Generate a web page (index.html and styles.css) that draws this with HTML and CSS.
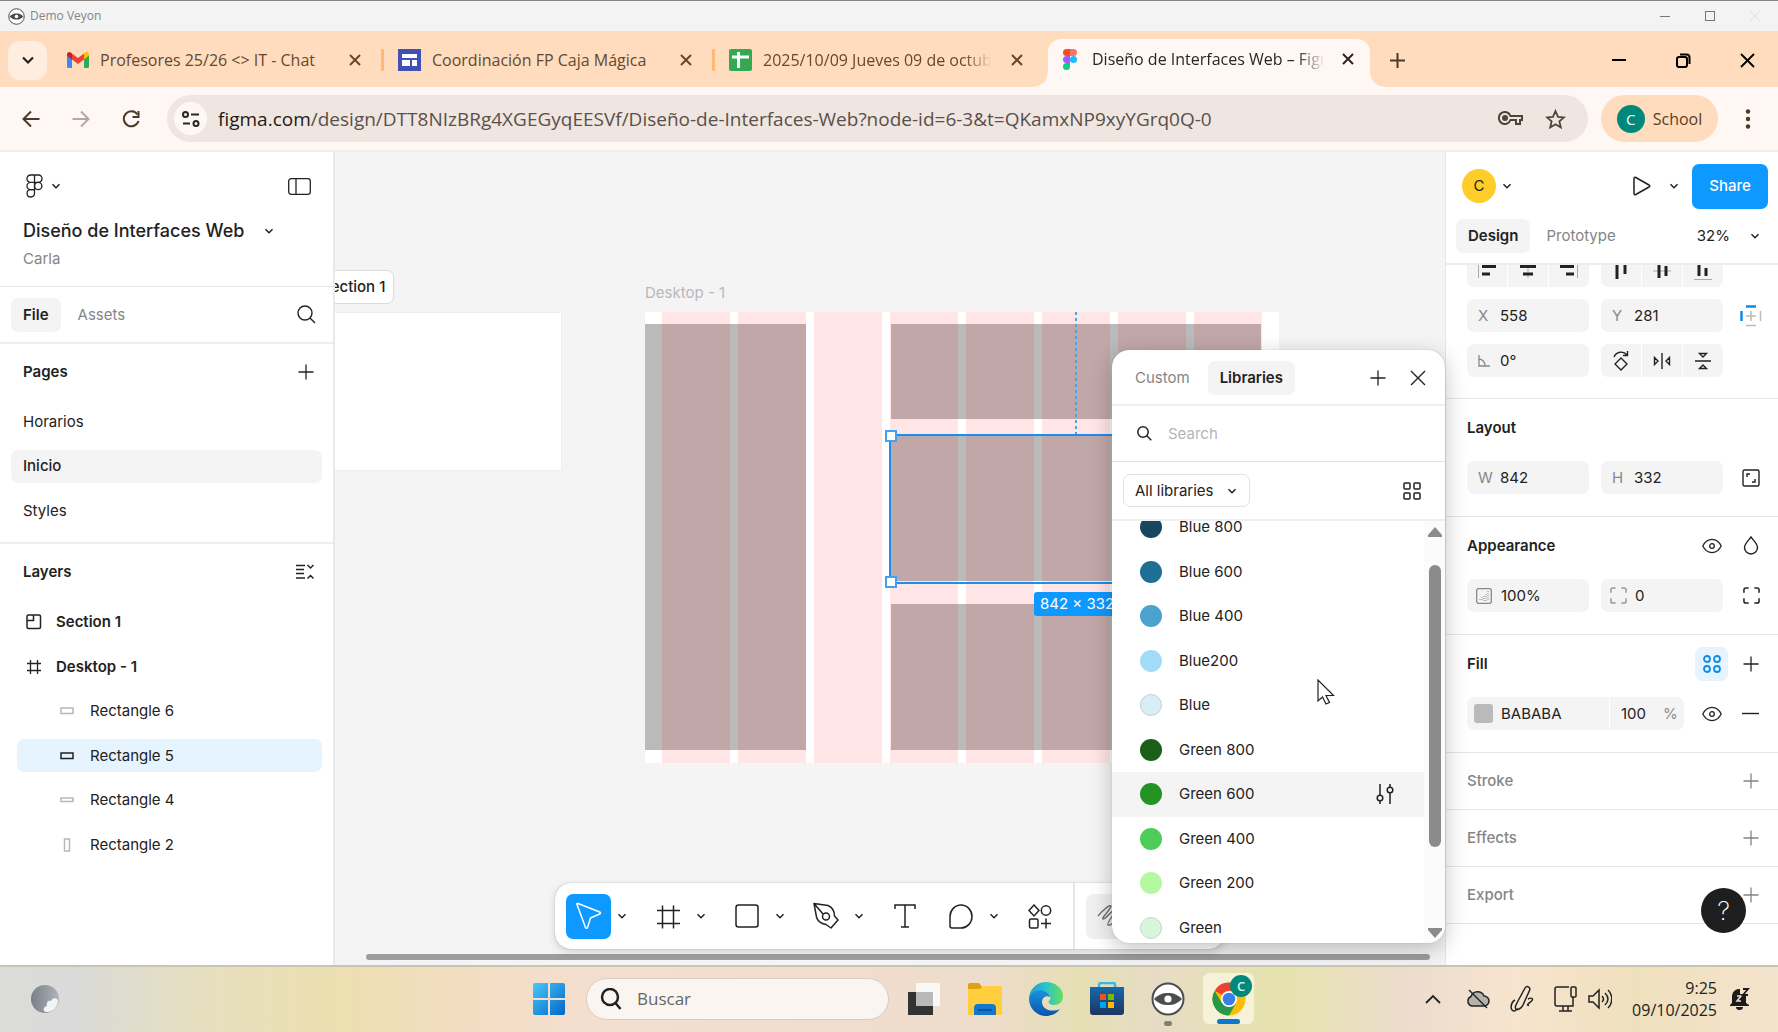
FILE: index.html
```html
<!DOCTYPE html>
<html lang="es">
<head>
<meta charset="utf-8">
<title>Demo Veyon</title>
<link rel="stylesheet" href="styles.css">
</head>
<body>
<svg class="sprite" aria-hidden="true">
  <symbol id="chev" viewBox="0 0 10 10"><path d="M1.5 3.3 5 6.8l3.5-3.5" fill="none" stroke="currentColor" stroke-width="1.5"/></symbol>
  <symbol id="plus" viewBox="0 0 16 16"><path d="M8 .5v15M.5 8h15" fill="none" stroke="currentColor" stroke-width="1.3"/></symbol>
  <symbol id="x" viewBox="0 0 12 12"><path d="m1 1 10 10M11 1 1 11" fill="none" stroke="currentColor" stroke-width="2"/></symbol>
  <symbol id="frame" viewBox="0 0 16 16"><path d="M4.5 1v14M11.500 1v14M1 4.500h14M1 11.500h14" fill="none" stroke="currentColor" stroke-width="1.300"/></symbol>
  <symbol id="frame-lg" viewBox="0 0 24 24"><path d="M6.500 1v23M17.500 1v23M1 6h23M1 19h23" fill="none" stroke="currentColor" stroke-width="1.500"/></symbol>
  <symbol id="eye" viewBox="0 0 20 16"><path d="M.8 8C3 3.600 6.300 1.400 10 1.400S17 3.600 19.200 8c-2.200 4.400-5.500 6.600-9.200 6.600S3 12.400.8 8Z" fill="none" stroke="currentColor" stroke-width="1.3"/><circle cx="10" cy="8" r="2.300" fill="none" stroke="currentColor" stroke-width="1.300"/></symbol>
  <symbol id="corners" viewBox="0 0 18 18"><path d="M1 6V3a2 2 0 0 1 2-2h3M12 1h3a2 2 0 0 1 2 2v3M17 12v3a2 2 0 0 1-2 2h-3M6 17H3a2 2 0 0 1-2-2v-3" fill="none" stroke="currentColor" stroke-width="1.600"/></symbol>
  <symbol id="wide" viewBox="0 0 14 8"><path d="M1 1h12v5.500H1z" fill="none" stroke="currentColor" stroke-width="1.500"/></symbol>
  <symbol id="veyon" viewBox="0 0 34 34"><circle cx="17" cy="17" r="15.500" fill="#fff" stroke="#4d4d4f" stroke-width="2"/><path d="M3 17c5-5 9-6 14-6s9 1 14 6c-5 5-9 6-14 6S8 22 3 17Z" fill="#4d4d4f"/><circle cx="17" cy="17" r="3.600" fill="#fff"/></symbol>
</svg>

<header class="titlebar">
  <svg width="17" height="17"><use href="#veyon"/></svg>
  <span class="titlebar-name">Demo Veyon</span>
  <div class="title-controls">
    <button aria-label="Minimizar"><svg width="12" height="12"><path d="M1 6.500h10" stroke="#777"/></svg></button>
    <button aria-label="Maximizar"><svg width="12" height="12"><rect x="1.500" y="1.500" width="9" height="9" fill="none" stroke="#777"/></svg></button>
    <button aria-label="Cerrar"><svg width="12" height="12"><path d="m1 1 10 10M11 1 1 11" stroke="#ddd"/></svg></button>
  </div>
</header>

<nav class="tabstrip">
  <button class="tab-search" aria-label="Buscar pestañas"><svg width="14" height="14" viewBox="0 0 14 14"><path d="m2 4.500 5 5 5-5" fill="none" stroke="#222" stroke-width="2.200"/></svg></button>
  <div class="tab">
    <svg width="22" height="16" viewBox="0 0 22 16"><path d="M0 3v11.500A1.500 1.500 0 0 0 1.500 16H5V6Z" fill="#4285f4"/><path d="M22 3v11.500a1.500 1.500 0 0 1-1.500 1.500H17V6Z" fill="#34a853"/><path d="M17 1.500V7.500l5-4V2.500C22 .2 19.700-.7 18 .7Z" fill="#fbbc04"/><path d="M5 1.500V7.500L0 3.500V2.500C0 .2 2.300-.7 4 .7Z" fill="#c5221f"/><path d="M5 1.500v6l6 4.500 6-4.500v-6L11 6Z" fill="#ea4335"/></svg>
    <span class="tab-name">Profesores 25/26 &lt;&gt; IT - Chat</span>
    <button class="tab-close" aria-label="Cerrar pestaña"><svg width="12" height="12"><use href="#x"/></svg></button>
  </div>
  <div class="tab">
    <svg width="23" height="22" viewBox="0 0 23 22"><path d="M0 0h23v22H0z" fill="#3f51b5"/><path d="M4 5h15v4H4zM4 11h8v6H4zM14 11h5v6h-5z" fill="#fff"/></svg>
    <span class="tab-name">Coordinación FP Caja Mágica</span>
    <button class="tab-close" aria-label="Cerrar pestaña"><svg width="12" height="12"><use href="#x"/></svg></button>
  </div>
  <div class="tab">
    <svg width="23" height="22" viewBox="0 0 23 22"><rect width="23" height="22" rx="2" fill="#34a853"/><path d="M3 8h17M9.500 3v16" stroke="#fff" stroke-width="3"/></svg>
    <span class="tab-name fade">2025/10/09 Jueves 09 de octubre</span>
    <button class="tab-close" aria-label="Cerrar pestaña"><svg width="12" height="12"><use href="#x"/></svg></button>
  </div>
  <div class="tab active">
    <svg width="14" height="21" viewBox="0 0 14 21"><path d="M7 0H3.500a3.500 3.500 0 0 0 0 7H7Z" fill="#f24e1e"/><path d="M7 0h3.500a3.500 3.500 0 0 1 0 7H7Z" fill="#ff7262"/><path d="M7 7H3.500a3.500 3.500 0 0 0 0 7H7Z" fill="#a259ff"/><circle cx="10.500" cy="10.500" r="3.500" fill="#1abcfe"/><path d="M7 14H3.500A3.500 3.500 0 1 0 7 17.500Z" fill="#0acf83"/></svg>
    <span class="tab-name fade">Diseño de Interfaces Web – Figma</span>
    <button class="tab-close" aria-label="Cerrar pestaña"><svg width="12" height="12"><use href="#x"/></svg></button>
  </div>
  <button class="new-tab" aria-label="Nueva pestaña"><svg width="15" height="15" viewBox="0 0 15 15"><path d="M7.500 0v15M0 7.500h15" stroke="#4b3a28" stroke-width="2"/></svg></button>
  <div class="win-controls">
    <button aria-label="Minimizar"><svg width="15" height="15"><path d="M0 7h14" stroke="#000" stroke-width="2"/></svg></button>
    <button aria-label="Restaurar"><svg width="15" height="15" fill="none" stroke="#000" stroke-width="2"><rect x="1" y="4" width="10" height="10" rx="2"/><path d="M4 1.500h6.500a3 3 0 0 1 3 3V11"/></svg></button>
    <button aria-label="Cerrar"><svg width="15" height="15"><path d="m1 1 13 13M14 1 1 14" stroke="#000" stroke-width="1.800"/></svg></button>
  </div>
</nav>

<div class="navbar">
  <button class="nav-btn" aria-label="Atrás"><svg width="18" height="18" fill="none" stroke="#4b3a28" stroke-width="2"><path d="M17.500 9H2M9 1.500 1.500 9 9 16.500"/></svg></button>
  <button class="nav-btn" aria-label="Adelante"><svg width="18" height="18" fill="none" stroke="#b3aaa4" stroke-width="2"><path d="M.5 9H16M9 1.500 16.500 9 9 16.500"/></svg></button>
  <button class="nav-btn" aria-label="Recargar"><svg width="18" height="18" fill="none" stroke="#4b3a28" stroke-width="2"><path d="M15.500 4.500A7.500 7.500 0 1 0 16.500 11"/><path d="M16.500 1v6h-6"/></svg></button>
  <div class="omnibox">
    <button class="tune" aria-label="Información del sitio"><svg width="18" height="16" fill="none" stroke="#2c2520" stroke-width="2"><circle cx="3.500" cy="3.500" r="2.500"/><path d="M9 3.500h8M1 12.500h7"/><circle cx="14" cy="12.500" r="2.500"/></svg></button>
    <div class="url"><span>figma.com</span>/design/DTT8NIzBRg4XGEGyqEESVf/Diseño-de-Interfaces-Web?node-id=6-3&amp;t=QKamxNP9xyYGrq0Q-0</div>
    <button class="nav-icon" aria-label="Contraseñas"><svg width="25" height="15" fill="none" stroke="#4f443c" stroke-width="2"><path d="M12.500 5H24v4h-2v4h-4V9h-5.500A6 6 0 1 1 12.500 5Z"/><circle cx="7" cy="7" r="2" fill="#4f443c"/></svg></button>
    <button class="nav-icon" aria-label="Marcador"><svg width="21" height="20" viewBox="0 0 21 20"><path d="m10.500 2 2.500 5.800 6 .6-4.600 4 1.400 6-5.300-3.200-5.300 3.200 1.400-6L2 8.400l6-.6Z" fill="none" stroke="#4f443c" stroke-width="1.800"/></svg></button>
  </div>
  <button class="profile"><span class="avatar">C</span>School</button>
  <button class="nav-menu" aria-label="Menú"><svg width="6" height="20" fill="#4b3a28"><circle cx="3" cy="2.500" r="2.200"/><circle cx="3" cy="10" r="2.200"/><circle cx="3" cy="17.500" r="2.200"/></svg></button>
</div>

<main class="app">
  <aside class="left">
    <div class="file-head">
      <div class="logo-row">
        <button class="logo" aria-label="Menú principal"><svg width="17" height="24" viewBox="0 0 17 24" fill="none" stroke="#222" stroke-width="1.300"><path d="M8.500 1H4.600a3.600 3.600 0 0 0 0 7.300h3.900ZM8.500 1h3.900a3.600 3.600 0 0 1 0 7.300H8.500ZM8.500 8.300H4.600a3.600 3.600 0 0 0 0 7.300h3.900Z"/><circle cx="12.200" cy="12" r="3.700"/><path d="M8.500 15.600H4.600a3.700 3.700 0 1 0 3.900 3.700Z"/></svg><svg width="10" height="10"><use href="#chev"/></svg></button>
        <button aria-label="Panel lateral"><svg width="23" height="17" fill="none" stroke="#222" stroke-width="1.300"><rect x=".7" y=".7" width="21.600" height="15.600" rx="2.500"/><path d="M8 .7v15.600"/></svg></button>
      </div>
      <button class="file-name">Diseño de Interfaces Web<svg width="10" height="10"><use href="#chev"/></svg></button>
      <div class="owner">Carla</div>
    </div>
    <div class="file-tabs">
      <button class="pill on">File</button><button class="pill">Assets</button>
      <button class="push" aria-label="Buscar"><svg width="19" height="19" fill="none" stroke="#222" stroke-width="1.400"><circle cx="8" cy="8" r="7"/><path d="m13 13 5 5"/></svg></button>
    </div>
    <section class="pages">
      <div class="sec-head"><h2>Pages</h2><button aria-label="Añadir página"><svg width="16" height="16"><use href="#plus"/></svg></button></div>
      <ul class="page-list"><li><button>Horarios</button></li><li><button class="current">Inicio</button></li><li><button>Styles</button></li></ul>
    </section>
    <section class="layers">
      <div class="sec-head"><h2>Layers</h2><button aria-label="Contraer capas"><svg width="18" height="16" fill="none" stroke="#222" stroke-width="1.500"><path d="M0 1.500h9M0 5.500h8M0 9.500h8M0 14h9M11.500 1l3 3 3-3M11.500 14.500l3-3 3 3"/></svg></button></div>
      <ul class="layer-list">
        <li><button class="top"><svg width="16" height="16" fill="none" stroke="#222" stroke-width="1.500"><rect x="1" y="1" width="13.500" height="13.500" rx="1.500"/><path d="M1 6.500h6.500V1"/></svg>Section 1</button></li>
        <li><button class="top"><svg width="16" height="16"><use href="#frame"/></svg>Desktop - 1</button></li>
        <li><button><svg width="14" height="8"><use href="#wide"/></svg>Rectangle 6</button></li>
        <li><button class="sel"><svg width="14" height="8"><use href="#wide"/></svg>Rectangle 5</button></li>
        <li><button><svg width="14" height="6" viewBox="0 0 14 6"><path d="M1 1h12v3.500H1z" fill="none" stroke="currentColor" stroke-width="1.500"/></svg>Rectangle 4</button></li>
        <li><button><svg width="14" height="14" viewBox="0 0 14 14"><path d="M4.500 1h5v12h-5z" fill="none" stroke="currentColor" stroke-width="1.500"/></svg>Rectangle 2</button></li>
      </ul>
    </section>
  </aside>

  <div class="canvas">
    <div class="section-label">Section 1</div>
    <div class="section-box"></div>
    <div class="frame-label">Desktop - 1</div>
    <div class="artboard">
      <div class="shape r2"></div><div class="shape r4"></div><div class="shape r5"></div><div class="shape r6"></div>
      <div class="columns"><i></i><i></i><i></i><i></i><i></i><i></i><i></i><i></i></div>
      <div class="guide"></div>
      <div class="selection"><b class="h1"></b><b class="h2"></b></div>
      <div class="size">842 × 332</div>
    </div>
    <div class="hscroll"></div>
    <div class="tools">
      <button class="tool move" aria-label="Mover"><svg width="26" height="28" fill="none" stroke="#fff" stroke-width="1.500" stroke-linejoin="round"><path d="M2 1.500c-.8-.3-1.300.3-1 1l8.500 23c.4 1 1.700 1 2 0l3-9.500 9.200-4c1.100-.5 1-1.500 0-2Z"/></svg></button>
      <button class="drop" aria-label="Más"><svg width="10" height="10"><use href="#chev"/></svg></button>
      <button class="tool" aria-label="Marco"><svg width="24" height="25"><use href="#frame-lg"/></svg></button>
      <button class="drop" aria-label="Más"><svg width="10" height="10"><use href="#chev"/></svg></button>
      <button class="tool" aria-label="Rectángulo"><svg width="24" height="24" fill="none" stroke="#222" stroke-width="1.500"><rect x="1" y="1" width="22" height="22" rx="2.500"/></svg></button>
      <button class="drop" aria-label="Más"><svg width="10" height="10"><use href="#chev"/></svg></button>
      <button class="tool" aria-label="Pluma"><svg width="26" height="28" fill="none" stroke="#222" stroke-width="1.500" stroke-linejoin="round"><path d="m1 1.500 14 2c4.500 2 6.500 6 6.500 10.500l3.500 4-7 8-5-3.500C8 21.500 4.500 19.500 3.500 15ZM1 1.500l9 10.500"/><circle cx="13" cy="14.500" r="3.500"/></svg></button>
      <button class="drop" aria-label="Más"><svg width="10" height="10"><use href="#chev"/></svg></button>
      <button class="tool solo" aria-label="Texto"><svg width="22" height="24" fill="none" stroke="#222" stroke-width="1.500"><path d="M1 5V1h20v4M11 1v22M7 23h8"/></svg></button>
      <button class="tool" aria-label="Comentario"><svg width="24" height="25" fill="none" stroke="#222" stroke-width="1.500"><path d="M12 1a11 11.500 0 1 1 0 23H3a2 2 0 0 1-2-2v-9.500A11 11.500 0 0 1 12 1Z"/></svg></button>
      <button class="drop" aria-label="Más"><svg width="10" height="10"><use href="#chev"/></svg></button>
      <button class="tool" aria-label="Acciones"><svg width="24" height="25" fill="none" stroke="#222" stroke-width="1.500"><path d="m6 1 5 5.500L6 12 1 6.500Z"/><circle cx="18" cy="6.500" r="4.700"/><rect x="1.500" y="15" width="8.500" height="9" rx="1.500"/><path d="M18 14.500v10M13 19.500h10"/></svg></button>
      <span class="tool-sep"></span>
      <button class="tool draw" aria-label="Dibujar"><svg width="24" height="24" fill="none" stroke="#777" stroke-width="1.500"><path d="M1 12C5 7 13 0 14 2S4 14 6 15 18 3 19 5 9 19 11 21s7-5 9-4 0 4 3 3"/></svg></button>
      <button class="tool" aria-label="Código"></button>
    </div>
  </div>

  <aside class="right">
    <div class="r-head">
      <button class="user" aria-label="Usuario"><span>C</span><svg width="10" height="10"><use href="#chev"/></svg></button>
      <button class="play" aria-label="Presentar"><svg width="18" height="20" fill="none" stroke="#222" stroke-width="1.500" stroke-linejoin="round"><path d="M1 2.500v15c0 1 .8 1.500 1.800 1L16 11c1-.6 1-1.500 0-2L2.800 1.500C1.800 1 1 1.500 1 2.500Z"/></svg></button>
      <button class="play-more" aria-label="Opciones"><svg width="10" height="10"><use href="#chev"/></svg></button>
      <button class="share">Share</button>
    </div>
    <div class="r-tabs"><button class="pill on">Design</button><button class="pill">Prototype</button><button class="zoom">32%<svg width="10" height="10"><use href="#chev"/></svg></button></div>

    <section class="position">
      <div class="prop-row align">
        <div class="seg">
          <button aria-label="Izquierda"><svg width="20" height="16"><path d="M1.500 0v15" stroke="#aaa"/><path d="M5 3.500h14M5 11h8" stroke="#222" stroke-width="3"/></svg></button>
          <button aria-label="Centro"><svg width="18" height="16"><path d="M9 0v15" stroke="#aaa"/><path d="M1 3.500h16M4 11h10" stroke="#222" stroke-width="3"/></svg></button>
          <button aria-label="Derecha"><svg width="20" height="16"><path d="M18.500 0v15" stroke="#aaa"/><path d="M1 3.500h14M7 11h8" stroke="#222" stroke-width="3"/></svg></button>
        </div>
        <div class="seg">
          <button aria-label="Arriba"><svg width="14" height="16"><path d="M3 1v15M11 1v10" stroke="#222" stroke-width="3"/></svg></button>
          <button aria-label="Medio"><svg width="18" height="16"><path d="M0 8h18" stroke="#aaa"/><path d="M6 0v15M13 3v10" stroke="#222" stroke-width="3"/></svg></button>
          <button aria-label="Abajo"><svg width="18" height="18"><path d="M0 17.500h18" stroke="#aaa"/><path d="M5 0v14M12 6v8" stroke="#222" stroke-width="3"/></svg></button>
        </div>
      </div>
      <div class="prop-row">
        <label class="field"><span>X</span><input value="558"></label>
        <label class="field"><span>Y</span><input value="281"></label>
        <button class="end" aria-label="Restricciones"><svg width="22" height="22" fill="none"><path d="M6 1.500h10M1.500 6v10" stroke="#0c8ce9" stroke-width="2.500"/><path d="M20.500 6v10M6 20.500h10M11 6v10M6 11h10" stroke="#bbb" stroke-width="1.500"/></svg></button>
      </div>
      <div class="prop-row">
        <label class="field"><span><svg width="12" height="12" fill="none" stroke="#888" stroke-width="1.300"><path d="M1 0v11h11M1 4a6.500 6.500 0 0 1 6 7"/></svg></span><input value="0°" aria-label="Rotación"></label>
        <div class="seg">
          <button aria-label="Girar"><svg width="18" height="20" fill="none" stroke="#222" stroke-width="1.400"><path d="m9 7 6 6-6 6-6-6ZM2 6c2-5 9-7 13-2M15.500 0v4.500H11"/></svg></button>
          <button aria-label="Voltear horizontal"><svg width="18" height="18" fill="none" stroke="#222" stroke-width="1.400"><path d="M9 1v16M1.500 5.500 5 9l-3.500 3.500ZM16.500 5.500 13 9l3.500 3.500Z"/></svg></button>
          <button aria-label="Voltear vertical"><svg width="18" height="18" fill="none" stroke="#222" stroke-width="1.400"><path d="M1 9h16M5.500 1.500h7L9 5ZM5.500 16.500h7L9 13Z"/></svg></button>
        </div>
      </div>
    </section>
    <section>
      <div class="prop-head"><h2>Layout</h2></div>
      <div class="prop-row">
        <label class="field"><span>W</span><input value="842"></label>
        <label class="field"><span>H</span><input value="332"></label>
        <button class="end" aria-label="Bloquear proporción"><svg width="18" height="18" fill="none" stroke="#222" stroke-width="1.400"><rect x="1" y="1" width="16" height="16" rx="1.500"/><path d="M5 8V5h3M13 10v3h-3"/></svg></button>
      </div>
    </section>
    <section>
      <div class="prop-head"><h2>Appearance</h2><button aria-label="Visibilidad"><svg width="20" height="16"><use href="#eye"/></svg></button><button class="end" aria-label="Mezcla"><svg width="16" height="19" fill="none" stroke="#222" stroke-width="1.400"><path d="M8 1c3 4 6.500 7 6.500 10.500a6.500 6.500 0 0 1-13 0C1.500 8 5 5 8 1Z"/></svg></button></div>
      <div class="prop-row">
        <label class="field with-icon"><span><svg width="16" height="16" fill="none" stroke="#888"><rect x=".7" y=".7" width="14.600" height="14.600" rx="2" stroke-width="1.300"/><path d="M12 3v10M10 6v7M8 8v5M6 9v4M4 11v2" stroke-dasharray="1 1"/></svg></span><input value="100%" aria-label="Opacidad"></label>
        <label class="field with-icon"><span><svg width="17" height="17" color="#999"><use href="#corners"/></svg></span><input value="0" aria-label="Radio"></label>
        <button class="end" aria-label="Esquinas"><svg width="17" height="17"><use href="#corners"/></svg></button>
      </div>
    </section>
    <section>
      <div class="prop-head"><h2>Fill</h2><button class="style-btn" aria-label="Estilos"><svg width="18" height="18" fill="none" stroke="#0c8ce9" stroke-width="1.800"><circle cx="4" cy="4" r="3"/><circle cx="14" cy="4" r="3"/><circle cx="4" cy="14" r="3"/><circle cx="14" cy="14" r="3"/></svg></button><button class="end" aria-label="Añadir relleno"><svg width="16" height="16"><use href="#plus"/></svg></button></div>
      <div class="prop-row fill-row">
        <div class="paint"><i></i><input class="hex" value="BABABA" aria-label="Color"><input class="pct" value="100" aria-label="Opacidad"><span>%</span></div>
        <button class="eye" aria-label="Visibilidad"><svg width="20" height="16"><use href="#eye"/></svg></button>
        <button class="end" aria-label="Quitar"><svg width="18" height="16"><path d="M0 7.500h17" stroke="#222" stroke-width="1.400"/></svg></button>
      </div>
    </section>
    <section class="thin"><h2>Stroke</h2><button class="end" aria-label="Añadir borde"><svg width="16" height="16"><use href="#plus"/></svg></button></section>
    <section class="thin"><h2>Effects</h2><button class="end" aria-label="Añadir efecto"><svg width="16" height="16"><use href="#plus"/></svg></button></section>
    <section class="thin"><h2>Export</h2><button class="end" aria-label="Añadir exportación"><svg width="16" height="16"><use href="#plus"/></svg></button></section>
    <button class="help">?</button>
  </aside>

  <div class="popup" role="dialog" aria-label="Libraries">
    <div class="pop-head"><button class="pill">Custom</button><button class="pill on">Libraries</button>
      <button class="pop-add" aria-label="Añadir"><svg width="16" height="16"><use href="#plus"/></svg></button>
      <button aria-label="Cerrar"><svg width="16" height="16"><path d="m1 1 14 14M15 1 1 15" stroke="#222" stroke-width="1.400"/></svg></button></div>
    <label class="pop-search"><svg width="15" height="15" fill="none" stroke="#222" stroke-width="1.500"><circle cx="6" cy="6" r="5.200"/><path d="m9.800 9.800 4.500 4.500"/></svg><input type="search" placeholder="Search" aria-label="Search"></label>
    <div class="pop-filter"><div class="select"><select aria-label="Biblioteca"><option>All libraries</option></select><svg width="10" height="10"><use href="#chev"/></svg></div>
      <button aria-label="Cuadrícula"><svg width="18" height="18" fill="none" stroke="#222" stroke-width="1.500"><rect x="1" y="1" width="6" height="6" rx="1"/><rect x="11" y="1" width="6" height="6" rx="1"/><rect x="1" y="11" width="6" height="6" rx="1"/><rect x="11" y="11" width="6" height="6" rx="1"/></svg></button></div>
    <div class="pop-body">
      <ul class="swatches">
        <li><button><i class="b8"></i>Blue 800</button></li>
        <li><button><i class="b6"></i>Blue 600</button></li>
        <li><button><i class="b4"></i>Blue 400</button></li>
        <li><button><i class="b2"></i>Blue200</button></li>
        <li><button><i class="b0"></i>Blue</button></li>
        <li><button><i class="g8"></i>Green 800</button></li>
        <li><button class="hover"><i class="g6"></i>Green 600<svg width="18" height="20" fill="none" stroke="#222" stroke-width="1.500"><path d="M4 0v11M4 17v3M14 0v3M14 9v11"/><circle cx="4" cy="14" r="2.800"/><circle cx="14" cy="6" r="2.800"/></svg></button></li>
        <li><button><i class="g4"></i>Green 400</button></li>
        <li><button><i class="g2"></i>Green 200</button></li>
        <li><button><i class="g0"></i>Green</button></li>
      </ul>
      <div class="vscroll"><svg width="14" height="10" fill="#8b8b8b"><path d="M7 0 14 8v2H0V8Z"/></svg><span></span><svg width="14" height="10" fill="#8b8b8b"><path d="M7 10 14 2V0H0v2Z"/></svg></div>
    </div>
    <svg class="cursor" width="18" height="26" viewBox="0 0 18 26"><path d="M1 1v21l4.500-4 3.500 7 3.500-1.500-3.500-7h7.500Z" fill="#fff" stroke="#222" stroke-width="1.200"/></svg>
  </div>
</main>

<footer class="taskbar">
  <button class="weather" aria-label="Tiempo"><svg width="30" height="30"><defs><linearGradient id="mn" x2="1"><stop stop-color="#7a7f88"/><stop offset="1" stop-color="#aeb4bb"/></linearGradient></defs><circle cx="15" cy="15" r="14" fill="url(#mn)"/><path d="M28 16c0 7-5 12-11 12-3 0-4-2-3-4 .5-1 1.500-2 3-2-1-4 2-6 4-5 1-3 5-4 7-1Z" fill="#f3f4f6"/></svg></button>
  <div class="apps">
    <button aria-label="Inicio"><svg width="34" height="34"><defs><linearGradient id="wn" x2="1" y2="1"><stop stop-color="#49c8fb"/><stop offset="1" stop-color="#0067c8"/></linearGradient></defs><path d="M3 1h13v15H1V3a2 2 0 0 1 2-2ZM18 1h13a2 2 0 0 1 2 2v13H18ZM1 18h15v15H3a2 2 0 0 1-2-2ZM18 18h15v13a2 2 0 0 1-2 2H18Z" fill="url(#wn)"/></svg></button>
    <label class="search"><svg width="22" height="22" fill="none" stroke="#222" stroke-width="2.500"><circle cx="10" cy="9" r="8"/><path d="m15.500 15 5 6"/></svg><input placeholder="Buscar" aria-label="Buscar"></label>
    <button aria-label="Vista de tareas"><svg width="34" height="34"><path d="M1 10h25v23H1z" fill="#333"/><path d="M9 1h24v23H9z" fill="#fff" fill-opacity=".78"/><path d="M9 10h17v14H9z" fill="#b9b9b9"/></svg></button>
    <button aria-label="Explorador"><svg width="34" height="34"><path d="M0 3a2 2 0 0 1 2-2h9l3 4h18a2 2 0 0 1 2 2v26H0Z" fill="#e0a010"/><path d="M0 7l12 0 3-3h17a2 2 0 0 1 2 2v27H0Z" fill="#ffcd3d"/><path d="M6 33V26a4 4 0 0 1 4-4h14a4 4 0 0 1 4 4v7Z" fill="#1177cf"/><path d="M10 28h14" stroke="#0b5398" stroke-width="2"/></svg></button>
    <button aria-label="Edge"><svg width="34" height="34" viewBox="0 0 34 34"><defs><linearGradient id="e1" x2="1"><stop stop-color="#1d9ddb"/><stop offset=".5" stop-color="#2cc3c9"/><stop offset="1" stop-color="#64e05a"/></linearGradient><linearGradient id="e2" x2="0" y2="1"><stop stop-color="#1893e0"/><stop offset="1" stop-color="#0b55a8"/></linearGradient></defs><path d="M0 17A17 17 0 0 1 17 0c10 0 17 7 17 14 0 6-4 9-9 9-4 0-6-2-5-4 1-1 2-3 1-5-3-6-16-6-21 3Z" fill="url(#e1)"/><path d="M0 17c2-8 11-11 17-7 3 2 4 4 4 5-3-2-8 0-8 5 0 7 9 11 18 7-4 5-9 7-14 7A17 17 0 0 1 0 17Z" fill="url(#e2)"/></svg></button>
    <button aria-label="Store"><svg width="34" height="34"><defs><linearGradient id="st" x2="0" y2="1"><stop stop-color="#1569ae"/><stop offset="1" stop-color="#1e3560"/></linearGradient></defs><path d="M9 6V3a2 2 0 0 1 2-2h12a2 2 0 0 1 2 2v3" fill="none" stroke="#31b9e8" stroke-width="2.500"/><path d="M0 5h34v25a3 3 0 0 1-3 3H3a3 3 0 0 1-3-3Z" fill="url(#st)"/><path d="M10 12h6v6h-6z" fill="#f25022"/><path d="M18 12h6v6h-6z" fill="#7fba00"/><path d="M10 20h6v6h-6z" fill="#00a4ef"/><path d="M18 20h6v6h-6z" fill="#ffb900"/></svg></button>
    <button class="running" aria-label="Veyon"><svg width="34" height="34"><use href="#veyon"/></svg></button>
    <button class="running chrome" aria-label="Chrome"><svg width="34" height="34" viewBox="0 0 34 34"><circle cx="17" cy="17" r="16.500" fill="#fbbc04"/><path d="M17 17 2.700 8.700A16.500 16.500 0 0 1 31.300 8.700H17Z" fill="#ea4335"/><path d="M17 17 24 21.200 17 33.500A16.500 16.500 0 0 1 2.700 8.700L9.800 21Z" fill="#279847"/><circle cx="17" cy="17" r="8" fill="#fff"/><circle cx="17" cy="17" r="6.300" fill="#3a7de8"/></svg><span class="badge">C</span></button>
  </div>
  <div class="tray">
    <button aria-label="Iconos ocultos"><svg width="16" height="10" fill="none" stroke="#222" stroke-width="1.800"><path d="m1 9 7-7 7 7"/></svg></button>
    <button aria-label="OneDrive"><svg width="24" height="20" fill="#b5b2ac" stroke="#222" stroke-width="1.500"><path d="M6 17a5 5 0 0 1-1-9.500A7 7 0 0 1 18 7a5 5 0 0 1 0 10Z"/><path d="m3 1 18 18"/></svg></button>
    <button aria-label="Lápiz"><svg width="24" height="28" fill="none" stroke="#222" stroke-width="1.500"><path d="M8 16 15 3c1.500-3 6-1 4.500 2.500L13 20c-1 2-3 4-5 4.500s-3-1-2.500-3.500ZM5 15c-5 3-5 11-1 11 2 0 2-2 4-2M18 14c4-2 6 0 3 2.500s-5 4-2 4"/></svg></button>
    <button aria-label="Red"><svg width="24" height="28" fill="none" stroke="#222" stroke-width="1.500"><path d="M15 2H3a2 2 0 0 0-2 2v15a2 2 0 0 0 2 2h16v-9M5 26h13M9 21v5M14 21v5"/><rect x="17" y="2" width="5" height="10" rx="1"/></svg></button>
    <button aria-label="Volumen"><svg width="24" height="24" fill="none" stroke="#222" stroke-width="1.500"><path d="M1 9h4l6-6v18l-6-6H1ZM14 9c2 2 2 4 0 6M17 6c4 4 4 8 0 12M20 3c5 5 5 13 0 18"/></svg></button>
    <time>9:25<br>09/10/2025</time>
    <button aria-label="Notificaciones"><svg width="20" height="22" fill="#1b1b1b"><path d="M2 15V8a7 7 0 0 1 8-7v5h6v9l3 2v1H0v-1ZM6 19h7a3.500 3 0 0 1-7 0Z"/><path d="M7 8h4l-4 5h4" fill="none" stroke="#f3e3cc" stroke-width="1.500"/><path d="M13 1h5l-5 6h5" fill="none" stroke="#1b1b1b" stroke-width="1.800"/></svg></button>
  </div>
</footer>
</body>
</html>
```

FILE: styles.css
```css
* { box-sizing: border-box; }

body {
  margin: 0;
  height: 100vh;
  display: flex;
  flex-direction: column;
  overflow: hidden;
  background: #fff;
  color: #222;
  font: 15px/22px Inter, "Liberation Sans", sans-serif;
}

button, input, select { font: inherit; color: inherit; border: 0; padding: 0; margin: 0; background: none; outline: 0; }
button { display: flex; align-items: center; justify-content: center; flex: none; }
input { min-width: 0; }
ul { list-style: none; margin: 0; padding: 0; }
h2 { margin: 0; font-size: 15px; font-weight: 600; }
svg { display: block; flex: none; }
.sprite { position: absolute; width: 0; height: 0; }

/* Outer window */
.titlebar {
  flex: none;
  height: 31px;
  display: flex;
  align-items: center;
  gap: 5px;
  padding: 0 17px 0 8px;
  background: #f3f3f3;
  border-top: 1px solid #8b8583;
  font: 12px/16px "Open Sans", "Noto Sans", sans-serif;
  color: #858585;
}
.title-controls { margin-left: auto; display: flex; gap: 33px; }

/* Browser tabs */
.tabstrip {
  flex: none;
  height: 56px;
  display: flex;
  align-items: center;
  padding: 2px 9px 0 8px;
  background: #fedcbd;
  color: #64492f;
  font: 16px/24px "Open Sans", "Noto Sans", sans-serif;
}
.tab-search { width: 39px; height: 39px; border-radius: 12px; background: #ffede0; }
.tab { width: 331px; display: flex; align-items: center; gap: 11px; padding: 0 20px 0 14px; border-right: 3px solid #fdba74; height: 22px; }
.tab:nth-of-type(1) { margin-left: 6px; }
.tab:nth-of-type(3) { width: 333px; padding-right: 25px; border-right: 0; }
.tab-name { flex: 1; min-width: 0; overflow: hidden; white-space: nowrap; }
.tab-close { margin-left: 8px; }
.fade { -webkit-mask-image: linear-gradient(90deg, #000 88%, transparent); mask-image: linear-gradient(90deg, #000 88%, transparent); }
.tab.active {
  align-self: flex-end;
  position: relative;
  width: 322px;
  height: 48px;
  padding: 0 16px 8px 15px;
  gap: 15px;
  border: 0;
  border-radius: 13px 13px 0 0;
  background: #fff7f3;
  color: #2c2520;
}
.active .tab-close { margin-left: 2px; }
.tab.active::before, .tab.active::after { content: ""; position: absolute; bottom: 0; width: 14px; height: 14px; }
.tab.active::before { left: -14px; background: radial-gradient(circle at 0 0, #fedcbd 13px, #fff7f3 14px); }
.tab.active::after { right: -14px; background: radial-gradient(circle at 100% 0, #fedcbd 13px, #fff7f3 14px); }
.new-tab { margin-left: 20px; }
.win-controls { margin-left: auto; display: flex; gap: 49px; padding-right: 14px; }

/* Address bar */
.navbar {
  flex: none;
  height: 65px;
  display: flex;
  align-items: center;
  padding: 0 27px 0 22px;
  background: #fff7f3;
  border-bottom: 2px solid #f8ebe3;
}
.nav-btn { width: 18px; margin-right: 32px; }
.nav-btn:nth-child(3) { margin-right: 27px; }
.omnibox {
  flex: 1;
  min-width: 0;
  height: 47px;
  display: flex;
  align-items: center;
  gap: 22px;
  padding: 0 22px 0 7px;
  border-radius: 24px;
  background: #efe6e1;
}
.tune { width: 33px; height: 33px; border-radius: 50%; background: #fff7f3; }
.url { flex: 1; min-width: 0; margin-left: -11px; overflow: hidden; white-space: nowrap; font: 19px/28px "Open Sans", "Noto Sans", sans-serif; color: #5a504a; }
.url span { color: #1f1a17; }
.profile { width: 117px; height: 47px; margin: 0 27px 0 13px; gap: 8px; border-radius: 24px; background: #fedcbd; font: 16px/24px "Open Sans", "Noto Sans", sans-serif; color: #5b3c1e; }
.avatar { width: 28px; height: 28px; border-radius: 50%; background: #00897b; color: #fff; font-size: 15px; line-height: 28px; }

/* Editor */
.app { flex: 1; min-height: 0; display: flex; position: relative; }
.pill { height: 34px; padding: 0 12px; border-radius: 7px; color: #858585; }
.pill.on { background: #f4f4f4; color: #222; font-weight: 600; }

.left { flex: none; width: 335px; border-right: 2px solid #e9e9e9; }
.file-head { height: 135px; padding: 17px 22px 0 23px; border-bottom: 1px solid #e6e6e6; }
.logo-row { display: flex; justify-content: space-between; align-items: center; height: 34px; padding-left: 3px; }
.logo { gap: 8px; }
.file-name { margin-top: 16px; gap: 20px; font-size: 18px; line-height: 24px; font-weight: 500; }
.owner { margin-top: 6px; color: #858585; line-height: 20px; }
.file-tabs { height: 57px; display: flex; align-items: center; gap: 5px; padding: 0 17px 0 11px; border-bottom: 2px solid #efefef; }
.push { margin-left: auto; }
.sec-head { height: 56px; display: flex; align-items: center; justify-content: space-between; padding: 0 19px 0 23px; }
.pages { height: 200px; border-bottom: 2px solid #efefef; }
.page-list { height: 133px; padding: 0 11px; display: flex; flex-direction: column; }
.page-list li, .layer-list li { flex: 1; display: flex; align-items: center; }
.page-list button, .layer-list button { width: 100%; height: 33px; justify-content: flex-start; padding-left: 12px; border-radius: 7px; }
.page-list .current { background: #f4f4f4; font-weight: 500; }
.layer-list { height: 267px; padding: 0 11px 0 17px; display: flex; flex-direction: column; }
.layer-list button { gap: 16px; padding-left: 43px; }
.layer-list svg { color: #b8b8b8; }
.layer-list .top { gap: 14px; padding-left: 9px; font-weight: 600; }
.layer-list .top svg, .layer-list .sel svg { color: #222; }
.layer-list .sel { background: #e5f4ff; }

.canvas { flex: 1; min-width: 0; position: relative; overflow: hidden; background: #f4f4f4; }
.section-label { position: absolute; left: -23px; top: 118px; height: 34px; padding: 5px 8px; border: 1px solid #dcdcdc; border-radius: 7px; background: #fff; font-weight: 500; }
.section-box { position: absolute; left: 0; top: 160px; width: 227px; height: 159px; background: #fff; border: 1px solid #eee; border-left: 0; }
.frame-label { position: absolute; left: 310px; top: 130px; color: #b8b8b8; }
.artboard { position: absolute; left: 310px; top: 160px; width: 634px; height: 451px; background: #fff; }
.shape { position: absolute; background: #bababa; }
.r2 { left: 0; top: 12px; width: 161px; height: 426px; }
.r4 { left: 246px; top: 12px; width: 370px; height: 95px; }
.r5 { left: 246px; top: 124px; width: 370px; height: 145px; }
.r6 { left: 246px; top: 292px; width: 370px; height: 146px; }
.columns { position: absolute; inset: 0; padding: 0 17px; display: grid; grid-template-columns: repeat(8, 1fr); gap: 8px; }
.columns i { background: rgba(255, 0, 0, .1); }
.guide { position: absolute; left: 430px; top: 0; width: 2px; height: 122px; background: repeating-linear-gradient(#4ba3ee 0 3px, transparent 3px 6px); }
.selection { position: absolute; left: 244px; top: 122px; width: 374px; height: 150px; border: 2px solid #1a8fee; }
.selection b { position: absolute; left: -6px; width: 12px; height: 12px; border: 2px solid #3fa2f2; background: #fff; }
.h1 { top: -6px; }
.h2 { bottom: -6px; }
.size { position: absolute; left: 389px; top: 280px; height: 24px; padding: 0 6px; border-radius: 3px; background: #0d99ff; color: #fff; line-height: 24px; }
.hscroll { position: absolute; left: 31px; right: 15px; bottom: 5px; height: 6px; border-radius: 3px; background: #9d9d9d; }
.tools {
  position: absolute;
  left: 50%;
  bottom: 16px;
  width: 670px;
  margin-left: -335px;
  height: 66px;
  display: flex;
  align-items: center;
  overflow: hidden;
  padding-left: 11px;
  border-radius: 16px;
  background: #fff;
  box-shadow: 0 0 1px rgba(0,0,0,.4), 0 3px 8px rgba(0,0,0,.15);
}
.tool { width: 45px; height: 45px; border-radius: 7px; }
.tool.move { background: #0d99ff; }
.drop { width: 22px; height: 45px; margin-right: 12px; }
.tool.solo { margin: 0 11px 0 0; }
.tool-sep { width: 2px; height: 66px; margin: 0 11px; background: #e6e6e6; flex: none; }
.tool.draw { background: #f0f0f0; }

/* Properties panel */
.right { flex: none; width: 333px; position: relative; border-left: 1px solid #e6e6e6; background: #fff; }
.r-head { height: 67px; display: flex; align-items: center; padding: 1px 10px 0 16px; }
.user { gap: 6px; }
.user span { width: 34px; height: 34px; border-radius: 50%; background: #ffcd29; line-height: 34px; }
.play { margin-left: auto; }
.play-more { margin: 0 13px 0 18px; }
.share { width: 76px; height: 45px; border-radius: 7px; background: #0d99ff; color: #fff; font-weight: 500; }
.r-tabs { height: 46px; display: flex; align-items: flex-start; gap: 4px; padding: 0 18px 0 10px; border-bottom: 2px solid #ededed; }
.zoom { height: 34px; margin-left: auto; gap: 20px; }
.right section { padding: 0 16px 22px 21px; border-bottom: 1px solid #e6e6e6; }
.right .position { height: 134px; overflow: hidden; }
.prop-row { display: grid; grid-template-columns: 122px 122px 1fr; gap: 12px; height: 33px; }
.position .prop-row { margin-bottom: 12px; }
.position .align { margin-top: -11px; }
.field { display: flex; align-items: center; border-radius: 7px; background: #f4f4f4; padding-left: 9px; }
.field span { width: 24px; flex: none; color: #888; display: flex; padding-left: 2px; }
.field.with-icon span { width: 25px; padding-left: 0; }
.field input { width: 80px; }
.seg { display: grid; grid-template-columns: repeat(3, 1fr); gap: 1px; border-radius: 7px; overflow: hidden; }
.seg button { background: #f4f4f4; }
.end { justify-self: end; width: 22px; height: 33px; }
.prop-head { height: 62px; display: flex; align-items: center; gap: 18px; padding-bottom: 5px; }
.prop-head h2 { flex: 1; }
.style-btn { width: 33px; height: 34px; border-radius: 7px; background: #e5f4ff; }
.prop-head .style-btn { margin-right: -6px; }
.fill-row { grid-template-columns: 217px 1fr 22px; gap: 0; }
.paint { display: flex; align-items: center; border-radius: 7px; background: #f4f4f4; padding-left: 7px; }
.paint i { width: 19px; height: 19px; border-radius: 3px; background: #bababa; }
.paint .hex { width: 108px; margin-left: 8px; }
.paint .pct { width: 54px; height: 33px; padding-left: 11px; border-left: 1px solid #fff; }
.paint span { color: #888; }
.eye { justify-self: center; height: 33px; }
.right .thin { height: 57px; display: flex; align-items: center; justify-content: space-between; padding-bottom: 0; color: #858585; }
.thin h2 { font-weight: 500; }
.help { position: absolute; right: 32px; bottom: 32px; width: 45px; height: 45px; border-radius: 50%; background: #1e1e1e; color: #fff; font-size: 26px; font-weight: 200; }

/* Library picker */
.popup {
  position: absolute;
  right: 333px;
  top: 198px;
  bottom: 22px;
  width: 333px;
  display: flex;
  flex-direction: column;
  border-radius: 17px;
  background: #fff;
  box-shadow: 0 0 1px rgba(0,0,0,.3), 0 6px 22px rgba(0,0,0,.24);
}
.pop-head { flex: none; height: 56px; display: flex; align-items: center; gap: 6px; padding: 1px 19px 0 11px; border-bottom: 2px solid #efefef; }
.pop-head .pill.on { margin-right: auto; }
.pop-add { margin-right: 18px; }
.pop-search { flex: none; height: 56px; display: flex; align-items: center; gap: 16px; padding-left: 25px; border-bottom: 1px solid #e2e2e2; }
.pop-search input::placeholder { color: #b5b5b5; opacity: 1; }
.pop-filter { flex: none; height: 59px; display: flex; align-items: center; justify-content: space-between; padding: 0 24px 0 11px; border-bottom: 2px solid #efefef; }
.select { position: relative; }
.select select { appearance: none; width: 127px; height: 33px; padding: 0 30px 0 11px; border: 1px solid #e2e2e2; border-radius: 7px; }
.select svg { position: absolute; right: 13px; top: 12px; pointer-events: none; }
.pop-body { flex: 1; min-height: 0; display: flex; overflow: hidden; border-radius: 0 0 17px 17px; }
.swatches { flex: 1; height: 445px; margin-top: -16px; display: flex; flex-direction: column; }
.swatches li { flex: 1; display: flex; }
.swatches button { width: 100%; justify-content: flex-start; gap: 17px; padding: 0 30px 0 28px; }
.swatches .hover { background: #f4f4f4; }
.swatches svg { margin-left: auto; }
.swatches i { width: 22px; height: 22px; border-radius: 50%; }
.b8 { background: #17475f; }
.b6 { background: #1f6f94; }
.b4 { background: #4ba3cd; }
.b2 { background: #a2dcf9; }
.b0 { background: #d9edf7; border: 1px solid #bfd2dc; }
.g8 { background: #1a5e17; }
.g6 { background: #239423; }
.g4 { background: #4dcd57; }
.g2 { background: #b4f8a1; }
.g0 { background: #daf6da; border: 1px solid #bfdabf; }
.vscroll { width: 21px; display: flex; flex-direction: column; align-items: center; padding: 6px 0 5px; background: #fbfbfb; }
.vscroll span { width: 12px; height: 282px; margin: 28px 0 auto; border-radius: 6px; background: #8b8b8b; }
.cursor { position: absolute; left: 205px; top: 329px; }

/* Desktop bar */
.taskbar {
  flex: none;
  height: 67px;
  display: flex;
  align-items: center;
  justify-content: space-between;
  position: relative;
  padding: 0 28px 2px 30px;
  border-top: 2px solid #cbc2b6;
  background: linear-gradient(90deg, #dcdcda 0, #d9dad9 4%, #e6dfc0 11%, #ecdfb0 19%, #f3ddc4 27%, #f3dfd0 33%, #eedccd 55%, #e5dfb4 61%, #e6dcc6 65%, #e6e3ad 72%, #ecdccd 79%, #f7e4cf 85%, #efe0bd 92%, #f4e3cd 100%);
  font: 17px/22px "Open Sans", "Noto Sans", sans-serif;
}
.apps { position: absolute; left: 532px; display: flex; align-items: center; gap: 27px; }
.search { width: 303px; height: 42px; margin: 0 -9px 0 -7px; display: flex; align-items: center; gap: 15px; padding-left: 13px; border: 1px solid #d9cdc2; border-radius: 21px; background: #faf5f0; }
.search input::placeholder { color: #666; opacity: 1; }
.search input { width: 200px; }
.running { position: relative; }
.running::after { content: ""; position: absolute; left: 13px; bottom: -10px; width: 8px; height: 5px; border-radius: 3px; background: #878068; }
.chrome { width: 51px; height: 51px; margin-left: -9px; border-radius: 6px; background: #f5f2d8; }
.chrome::after { left: 14px; bottom: 0; width: 23px; background: #0a78d0; }
.badge { position: absolute; right: 2px; top: 2px; width: 22px; height: 22px; border-radius: 50%; background: #00897b; color: #d8f0e8; font-size: 13px; font-weight: 600; }
.tray { display: flex; align-items: center; gap: 20px; }
.tray button:nth-child(1) { margin-right: 5px; }
.tray button:nth-child(5) { margin-left: -10px; }
.tray time { margin: 0 -7px 0 0; text-align: right; font-size: 16px; }
```
